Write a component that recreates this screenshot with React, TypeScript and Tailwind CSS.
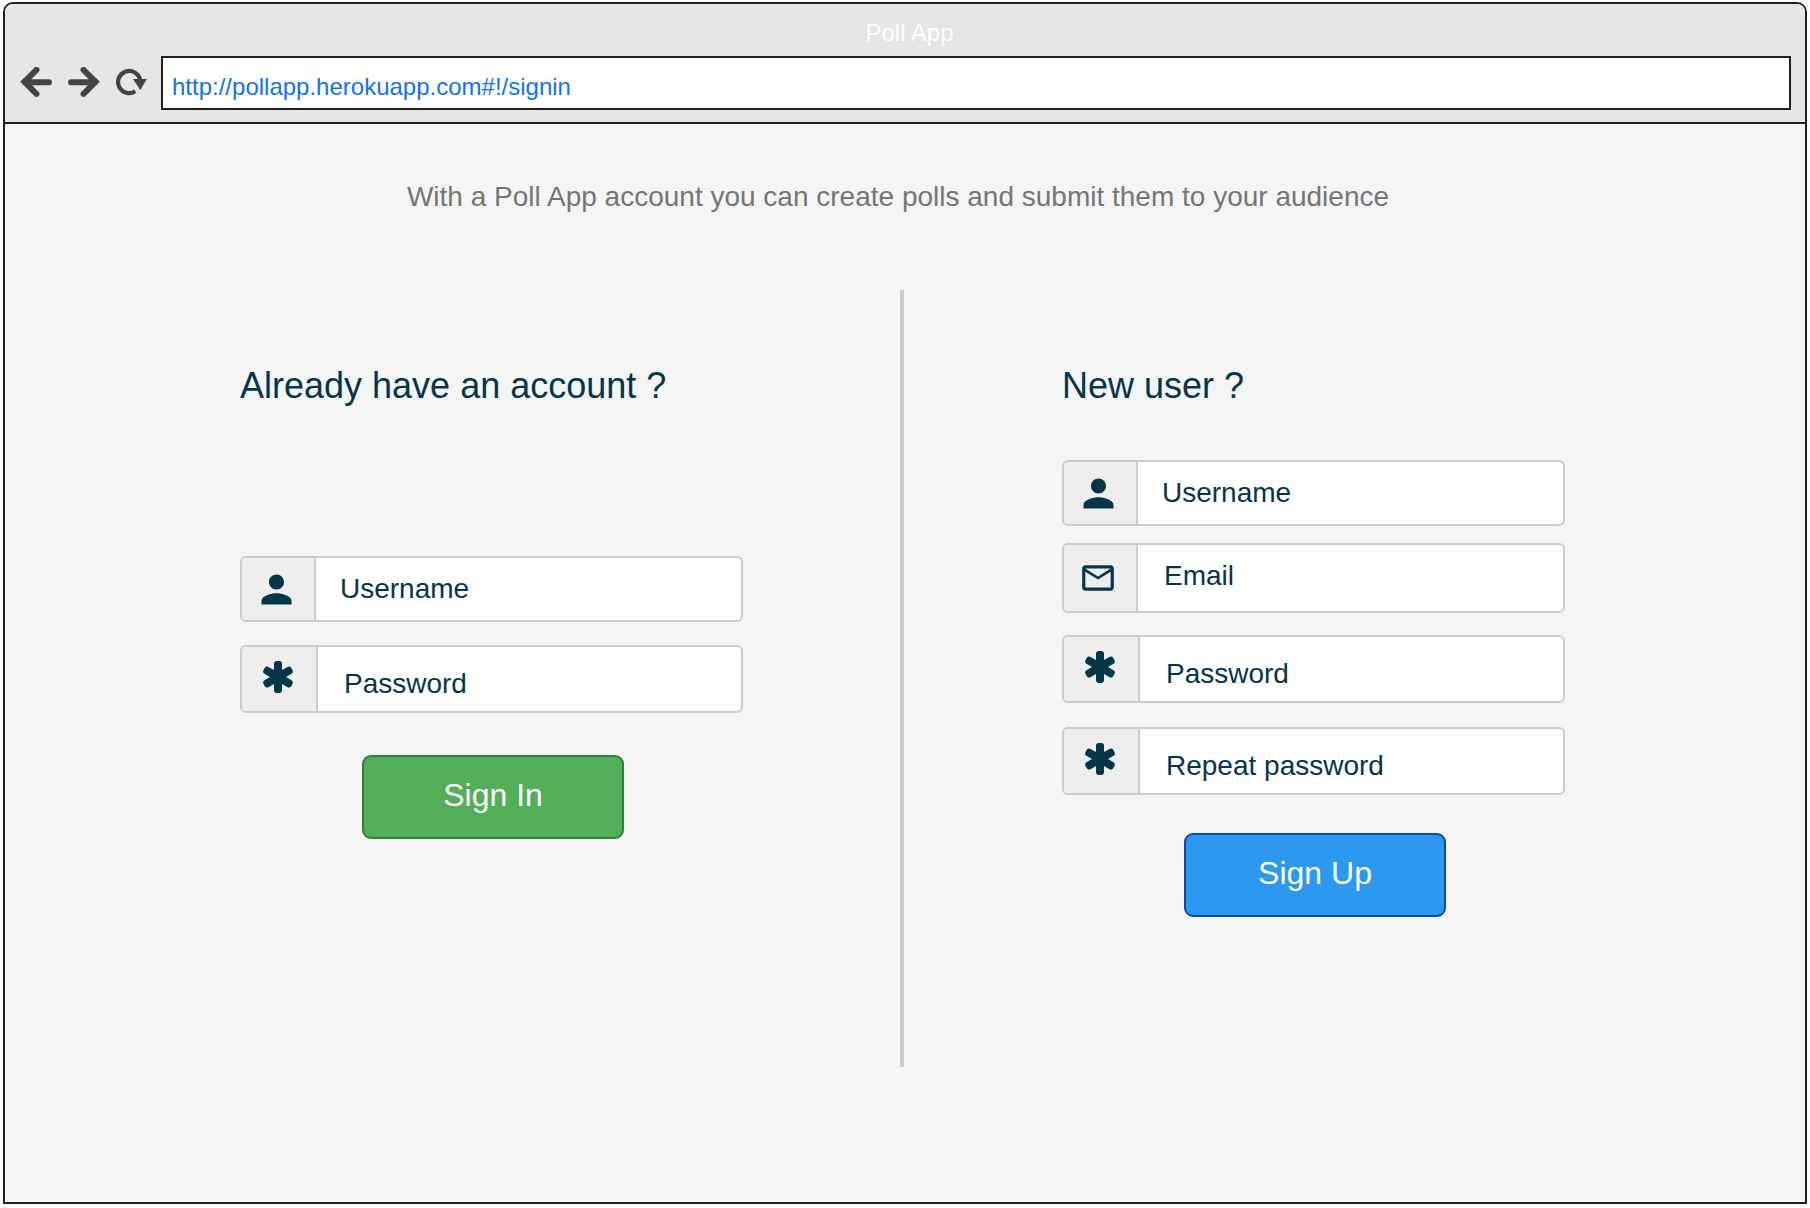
import React from "react";

type Kind = "user" | "mail" | "secret";

function UserIcon() {
  return (
    <svg viewBox="0 0 24 24" className="size-[45px]" fill="currentColor" aria-hidden="true">
      <path d="M12 12c2.21 0 4-1.79 4-4s-1.79-4-4-4-4 1.79-4 4 1.79 4 4 4zm0 2c-2.67 0-8 1.34-8 4v2h16v-2c0-2.66-5.33-4-8-4z" />
    </svg>
  );
}

function MailIcon() {
  return (
    <svg viewBox="0 0 24 24" className="size-[38px]" fill="currentColor" aria-hidden="true">
      <path d="M20 4H4c-1.1 0-1.99.9-1.99 2L2 18c0 1.1.9 2 2 2h16c1.1 0 2-.9 2-2V6c0-1.1-.9-2-2-2zm0 14H4V8l8 5 8-5v10zm-8-7L4 6h16l-8 5z" />
    </svg>
  );
}

function AsteriskIcon() {
  return (
    <svg viewBox="128 128 1536 1536" className="size-8" fill="currentColor" aria-hidden="true">
      <path d="M1546 1050q46 26 59.5 77.5t-12.5 97.5l-64 110q-26 46-77.5 59.5t-97.5-12.5l-266-153v307q0 52-38 90t-90 38h-128q-52 0-90-38t-38-90v-307l-266 153q-46 26-97.5 12.5t-77.5-59.5l-64-110q-26-46-12.5-97.5t59.5-77.5l266-154-266-154q-46-26-59.5-77.5t12.5-97.5l64-110q26-46 77.5-59.5t97.5 12.5l266 153v-307q0-52 38-90t90-38h128q52 0 90 38t38 90v307l266-153q46-26 97.5-12.5t77.5 59.5l64 110q26 46 12.5 97.5t-59.5 77.5l-266 154z" />
    </svg>
  );
}

const kinds: Record<Kind, { row: string; addon: string; input: string; icon: React.ReactNode }> = {
  user: { row: "h-[66px]", addon: "w-[74px] pr-1", input: "pl-6", icon: <UserIcon /> },
  mail: { row: "h-[70px]", addon: "w-[74px] pr-1", input: "pl-[26px] pb-1", icon: <MailIcon /> },
  secret: { row: "h-[68px]", addon: "w-[76px] pr-[2px] pb-1", input: "pl-[26px] pt-[10px]", icon: <AsteriskIcon /> },
};

function Field({ id, kind, label, className = "" }: { id: string; kind: Kind; label: string; className?: string }) {
  const k = kinds[kind];
  const type = kind === "secret" ? "password" : kind === "mail" ? "email" : "text";
  return (
    <div className={`flex w-full overflow-hidden rounded-md border-2 border-[#cccccc] bg-white ${k.row} ${className}`}>
      <label
        htmlFor={id}
        aria-label={label}
        className={`flex shrink-0 items-center justify-center border-r-2 border-[#cccccc] bg-[#eeeeee] ${k.addon}`}
      >
        {k.icon}
      </label>
      <input
        id={id}
        type={type}
        placeholder={label}
        className={`min-w-0 flex-1 bg-transparent text-[28px] text-[#043648] outline-none placeholder:text-[#043648] placeholder:opacity-100 ${k.input}`}
      />
    </div>
  );
}

export default function App() {
  return (
    <div className="flex min-h-screen flex-col bg-white px-[3px] pt-[2px] pb-1 font-['Liberation_Sans',Arial,sans-serif] text-[#043648]">
      <div className="flex flex-1 flex-col overflow-hidden rounded-t-[10px] border-2 border-[#231f20] bg-[#f5f5f5]">
        <header className="border-b-2 border-[#231f20] bg-[#e6e6e6] pr-[14px] pb-3 pl-[15px]">
          <div className="flex h-[52px] items-center justify-center pt-[6px] pl-2 text-2xl text-white">Poll App</div>
          <div className="flex items-center">
            <button type="button" aria-label="Back" className="mr-4 shrink-0 text-[#444444]">
              <svg viewBox="0 0 32 32" className="size-8" fill="none" stroke="currentColor" strokeWidth="6" strokeLinecap="round">
                <path d="M16.5 2.8 4.4 14.8l12.1 12M6 15.2h23" />
              </svg>
            </button>
            <button type="button" aria-label="Forward" className="mr-4 shrink-0 text-[#444444]">
              <svg viewBox="0 0 32 32" className="size-8" fill="none" stroke="currentColor" strokeWidth="6" strokeLinecap="round">
                <path d="M15.5 2.8l12.1 12-12.1 12M26 15.2H3" />
              </svg>
            </button>
            <button type="button" aria-label="Reload" className="mr-[13px] shrink-0 text-[#444444]">
              <svg viewBox="0 0 32 32" className="size-8" fill="none">
                <path d="M19.3 24.3A11.1 11.1 0 1 1 24.1 13" stroke="currentColor" strokeWidth="4.2" />
                <path d="M17 12h13.8L24.4 23z" fill="currentColor" />
              </svg>
            </button>
            <input
              type="text"
              aria-label="Address"
              defaultValue="http://pollapp.herokuapp.com#!/signin"
              className="h-[54px] min-w-0 flex-1 border-2 border-[#231f20] bg-white pt-2 pl-[9px] text-2xl text-[#1373e8] outline-none"
            />
          </div>
        </header>

        <main className="pt-[53px] pb-8">
          <p className="pr-[14px] text-center text-[28px] leading-10 text-[#757575]">
            With a Poll App account you can create polls and submit them to your audience
          </p>
          <div className="mt-[73px] grid min-h-[777px] grid-cols-[1fr_4px_1fr] pr-[6px]">
            <section className="pt-[76px] pl-[235px]">
              <h2 className="text-4xl leading-10">Already have an account ?</h2>
              <form className="mt-[150px] w-[503px] max-w-full">
                <Field id="signin-username" kind="user" label="Username" />
                <Field id="signin-password" kind="secret" label="Password" className="mt-[23px]" />
                <button
                  type="button"
                  className="mt-[42px] ml-[122px] block h-[84px] w-[262px] rounded-[9px] border-2 border-[#2f7d36] bg-[#52af57] pb-1 text-[32px] text-white"
                >
                  Sign In
                </button>
              </form>
            </section>
            <div className="bg-[#cccccc]" />
            <section className="pt-[76px] pl-[158px]">
              <h2 className="text-4xl leading-10">New user ?</h2>
              <form className="mt-[54px] w-[503px] max-w-full">
                <Field id="signup-username" kind="user" label="Username" />
                <Field id="signup-email" kind="mail" label="Email" className="mt-[17px]" />
                <Field id="signup-password" kind="secret" label="Password" className="mt-[22px]" />
                <Field id="signup-repeat" kind="secret" label="Repeat password" className="mt-6" />
                <button
                  type="button"
                  className="mt-[38px] ml-[122px] block h-[84px] w-[262px] rounded-[9px] border-2 border-[#1148a0] bg-[#2c98f0] pb-1 text-[32px] text-white"
                >
                  Sign Up
                </button>
              </form>
            </section>
          </div>
        </main>
      </div>
    </div>
  );
}
